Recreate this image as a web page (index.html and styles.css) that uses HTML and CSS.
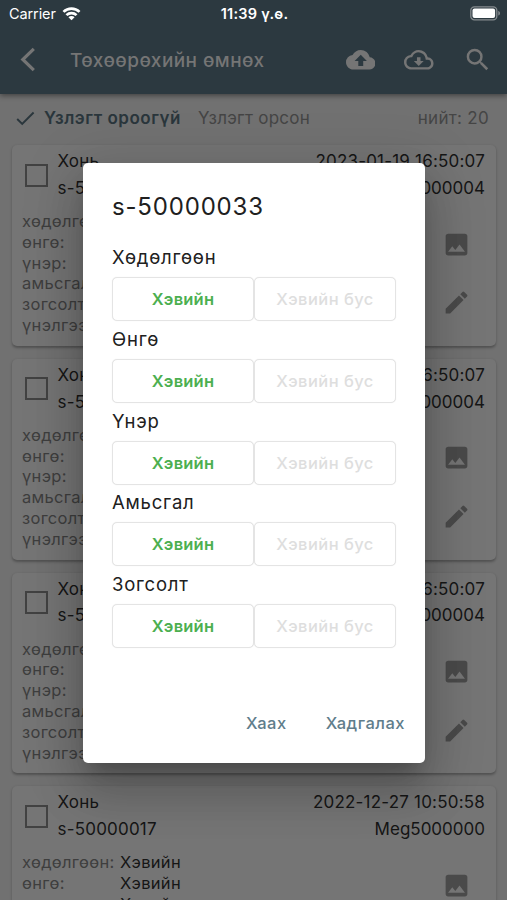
FILE: index.html
```
<!DOCTYPE html>
<html lang="mn">
<head>
<meta charset="utf-8">
<title>Төхөөрөхийн өмнөх</title>
<link rel="stylesheet" href="styles.css">
</head>
<body>
<svg class="defs" aria-hidden="true">
  <symbol id="photo" viewBox="0 0 24 24"><path d="M21 19V5c0-1.100-.9-2-2-2H5c-1.100 0-2 .9-2 2v14c0 1.100.9 2 2 2h14c1.100 0 2-.9 2-2zM8.500 13.500l2.500 3.010L14.500 12l4.500 6H5l3.500-4.500z"/></symbol>
  <symbol id="pencil" viewBox="0 0 24 24"><path d="M3 17.250V21h3.750L17.810 9.940l-3.750-3.750L3 17.250zM20.710 7.040a1 1 0 0 0 0-1.410l-2.340-2.340a1 1 0 0 0-1.410 0l-1.830 1.830 3.750 3.750 1.830-1.830z"/></symbol>
</svg>
<div class="screen">
  <header class="appbar">
    <div class="status">
      <div class="carrier"><span>Carrier</span>
        <svg width="19" height="14" viewBox="0 0 20 15"><g fill="none" stroke="#fff" stroke-width="2.900"><path d="M1.400 5.200a12.400 12.400 0 0 1 17.200 0"/><path d="M4.600 8.700a7.800 7.800 0 0 1 10.800 0"/></g><path d="M10 14.300L6.700 11a4.700 4.700 0 0 1 6.600 0z" fill="#fff"/></svg>
      </div>
      <div class="time">11:39 ү.ө.</div>
      <svg class="battery" width="31" height="15" viewBox="0 0 31 15"><rect x=".8" y=".8" width="26" height="13" rx="3.600" fill="none" stroke="#858b8e" stroke-width="1.300"/><rect x="2.500" y="2.500" width="22.600" height="9.600" rx="2" fill="#fff"/><path d="M28.300 5v4.600c2.300-.7 2.300-3.900 0-4.600z" fill="#858b8e"/></svg>
    </div>
    <div class="toolbar">
      <svg class="back" width="16" height="26" viewBox="0 0 16 26"><path d="M13.800 1.800L2.800 12.500l11 10.700" fill="none" stroke="#757575" stroke-width="3.200"/></svg>
      <h1>Төхөөрөхийн өмнөх</h1>
      <svg class="tool" viewBox="0 0 24 24"><path d="M19.350 10.040A7.490 7.490 0 0 0 12 4C9.110 4 6.600 5.640 5.350 8.040A5.994 5.994 0 0 0 0 14c0 3.310 2.690 6 6 6h13c2.760 0 5-2.240 5-5 0-2.640-2.050-4.780-4.650-4.960zM14 13v4h-4v-4H7l5-5 5 5h-3z"/></svg>
      <svg class="tool" viewBox="0 0 24 24"><path d="M19.350 10.040A7.490 7.490 0 0 0 12 4C9.110 4 6.600 5.640 5.350 8.040A5.994 5.994 0 0 0 0 14c0 3.310 2.690 6 6 6h13c2.760 0 5-2.240 5-5 0-2.640-2.050-4.780-4.650-4.960zM19 18H6c-2.210 0-4-1.790-4-4 0-2.050 1.530-3.760 3.560-3.970l1.070-.11.5-.95A5.469 5.469 0 0 1 12 6c2.620 0 4.880 1.860 5.390 4.430l.3 1.500 1.530.11A2.980 2.980 0 0 1 22 15c0 1.650-1.350 3-3 3zm-5.550-8h-2.900v3H8l4 4 4-4h-2.550z"/></svg>
      <svg class="tool" viewBox="0 0 24 24"><path d="M15.500 14h-.79l-.28-.27A6.471 6.471 0 0 0 16 9.500 6.500 6.500 0 1 0 9.500 16c1.610 0 3.090-.59 4.230-1.570l.27.28v.79l5 4.990L20.490 19l-4.990-5zm-6 0a4.500 4.500 0 1 1 0-9 4.500 4.500 0 0 1 0 9z"/></svg>
    </div>
  </header>
  <nav class="tabs">
    <svg width="19" height="15" viewBox="0 0 19 15"><path d="M1.200 8l5 5L17.600 1.500" fill="none" stroke="#2a363c" stroke-width="1.900"/></svg>
    <span class="tab active">Үзлэгт ороогүй</span>
    <span class="tab">Үзлэгт орсон</span>
    <span class="total">нийт: 20</span>
  </nav>
  <main class="list">
    <article class="card">
      <div class="head"><i class="check"></i><div class="names"><p>Хонь</p><p>s-50000033</p></div><div class="meta"><p>2023-01-19 16:50:07</p><p>Meg5000004</p></div></div>
      <div class="body"><dl><dt>хөдөлгөөн:</dt><dd></dd><dt>өнгө:</dt><dd></dd><dt>үнэр:</dt><dd></dd><dt>амьсгал:</dt><dd></dd><dt>зогсолт:</dt><dd></dd><dt>үнэлгээ:</dt><dd></dd></dl><div class="acts"><svg><use href="#photo"/></svg><svg><use href="#pencil"/></svg></div></div>
    </article>
    <article class="card">
      <div class="head"><i class="check"></i><div class="names"><p>Хонь</p><p>s-50000032</p></div><div class="meta"><p>2023-01-19 16:50:07</p><p>Meg5000004</p></div></div>
      <div class="body"><dl><dt>хөдөлгөөн:</dt><dd></dd><dt>өнгө:</dt><dd></dd><dt>үнэр:</dt><dd></dd><dt>амьсгал:</dt><dd></dd><dt>зогсолт:</dt><dd></dd><dt>үнэлгээ:</dt><dd></dd></dl><div class="acts"><svg><use href="#photo"/></svg><svg><use href="#pencil"/></svg></div></div>
    </article>
    <article class="card">
      <div class="head"><i class="check"></i><div class="names"><p>Хонь</p><p>s-50000031</p></div><div class="meta"><p>2023-01-19 16:50:07</p><p>Meg5000004</p></div></div>
      <div class="body"><dl><dt>хөдөлгөөн:</dt><dd></dd><dt>өнгө:</dt><dd></dd><dt>үнэр:</dt><dd></dd><dt>амьсгал:</dt><dd></dd><dt>зогсолт:</dt><dd></dd><dt>үнэлгээ:</dt><dd></dd></dl><div class="acts"><svg><use href="#photo"/></svg><svg><use href="#pencil"/></svg></div></div>
    </article>
    <article class="card">
      <div class="head"><i class="check"></i><div class="names"><p>Хонь</p><p>s-50000017</p></div><div class="meta"><p>2022-12-27 10:50:58</p><p>Meg5000000</p></div></div>
      <div class="body"><dl><dt>хөдөлгөөн:</dt><dd>Хэвийн</dd><dt>өнгө:</dt><dd>Хэвийн</dd><dt>үнэр:</dt><dd>Хэвийн</dd></dl><div class="acts"><svg><use href="#photo"/></svg></div></div>
    </article>
  </main>
  <section class="dialog" role="dialog">
    <h2>s-50000033</h2>
    <div class="field"><label>Хөдөлгөөн</label><div class="pair"><button class="on">Хэвийн</button><button>Хэвийн бус</button></div></div>
    <div class="field"><label>Өнгө</label><div class="pair"><button class="on">Хэвийн</button><button>Хэвийн бус</button></div></div>
    <div class="field"><label>Үнэр</label><div class="pair"><button class="on">Хэвийн</button><button>Хэвийн бус</button></div></div>
    <div class="field"><label>Амьсгал</label><div class="pair"><button class="on">Хэвийн</button><button>Хэвийн бус</button></div></div>
    <div class="field"><label>Зогсолт</label><div class="pair"><button class="on">Хэвийн</button><button>Хэвийн бус</button></div></div>
    <footer><span>Хаах</span><span>Хадгалах</span></footer>
  </section>
</div>
</body>
</html>
```
FILE: styles.css
```
* { box-sizing: border-box; }
body, h1, h2, p, dl, dd { margin: 0; }
body { font-family: Inter, "Noto Sans", sans-serif; }
.defs { display: none; }
.screen { position: relative; width: 507px; height: 900px; overflow: hidden; background: #717171; }
.appbar { position: relative; height: 94px; background: #2c3940; box-shadow: 0 2px 5px rgba(0,0,0,.4); }
.status { display: flex; justify-content: space-between; align-items: center; height: 27px; padding: 0 6px 0 9px; color: #fff; }
.carrier { display: flex; align-items: center; gap: 6px; width: 180px; font-size: 14.500px; letter-spacing: -.1px; }
.time { font-size: 14.500px; font-weight: 600; letter-spacing: .25px; }
.battery { margin-left: 150px; }
.toolbar { display: flex; align-items: center; height: 66px; padding: 0 15px 0 20px; }
.back { margin-right: 34px; }
h1 { flex: 1; font-size: 19px; font-weight: 500; letter-spacing: .42px; color: #757575; white-space: nowrap; }
.tool { width: 29.500px; height: 29.500px; margin-left: 29px; fill: #757575; }
.tabs { display: flex; align-items: center; height: 51px; padding: 0 18px 3px 16px; font-size: 17px; letter-spacing: .25px; color: #454545; }
.tab { margin-left: 17px; white-space: nowrap; }
.tab.active { margin-left: 9px; font-weight: 600; letter-spacing: .53px; color: #2a363c; }
.total { margin-left: auto; letter-spacing: .3px; }
.list { display: flex; flex-direction: column; gap: 13px; padding: 0 11px 0 12px; }
.card { flex: none; height: 200.800px; border-radius: 5px; background: #757575; box-shadow: 0 1.500px 2.500px rgba(0,0,0,.28); }
.head { display: flex; height: 66px; padding: 3px 11px 0 13px; font-size: 17px; line-height: 26.800px; letter-spacing: .2px; color: #161616; }
.check { width: 23px; height: 23px; margin: 15.500px 10px 0 0; border: 2.500px solid #424242; }
.names { margin-left: -.5px; }
.meta { margin-left: auto; text-align: right; }
.meta p:last-child { letter-spacing: 0; }
.body { display: flex; justify-content: space-between; padding: 0 25px 0 10px; }
dl { display: grid; grid-template-columns: 98px auto; grid-auto-rows: 20.800px; line-height: 20.800px; font-size: 16.500px; letter-spacing: .3px; }
dt { color: #3e3e3e; }
dd { color: #161616; }
.acts { display: flex; flex-direction: column; gap: 29.500px; padding-top: 18.500px; }
.acts svg { width: 29px; height: 29px; fill: #4a4a4a; }
.dialog { position: absolute; left: 83px; top: 163px; width: 342px; height: 600px; padding: 29px 29px 0; border-radius: 5px; background: #fff; box-shadow: 0 13px 18px -8px rgba(0,0,0,.22), 0 29px 46px 4px rgba(0,0,0,.15), 0 11px 55px 10px rgba(0,0,0,.13); }
h2 { height: 51px; font-size: 24px; line-height: 30px; font-weight: 400; letter-spacing: .82px; color: #202020; }
.field { height: 81.800px; }
label { display: block; height: 34px; font-size: 18.500px; line-height: 29px; letter-spacing: .78px; color: #202020; }
.pair { display: grid; grid-template-columns: 1fr 1fr; }
button { height: 44px; padding: 0; border: 1.500px solid #e4e4e4; border-radius: 5px; background: #fff; box-shadow: 0 0 1px #e4e4e4; font: 500 16.500px Inter, "Noto Sans", sans-serif; letter-spacing: .45px; color: #dedede; }
button.on { color: #4caf50; font-weight: 600; letter-spacing: .2px; }
footer { display: flex; justify-content: flex-end; gap: 39px; margin: 61px -9px 0 0; font-size: 16.500px; font-weight: 500; line-height: 20px; letter-spacing: .5px; color: #607d8b; }
```
